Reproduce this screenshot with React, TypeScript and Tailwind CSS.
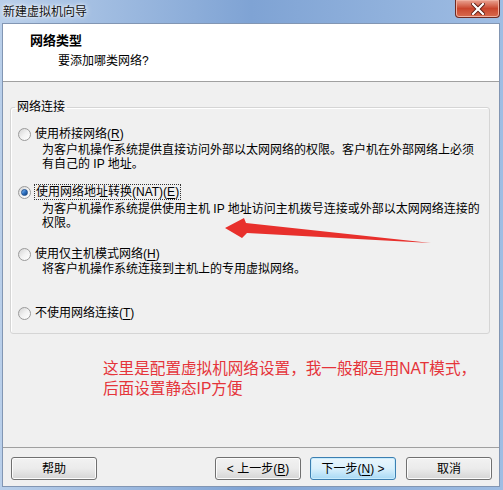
import React from "react"

const FONT = "font-['Liberation_Sans','Noto_Sans_CJK_SC',sans-serif]"

type Opt = {
  label: string
  key: string
  desc?: string[]
  checked?: boolean
  focus?: boolean
  mt: string
  descMt: string
}

const options: Opt[] = [
  {
    label: "使用桥接网络",
    key: "R",
    desc: ["为客户机操作系统提供直接访问外部以太网网络的权限。客户机在外部网络上必须", "有自己的 IP 地址。"],
    mt: "mt-[11px]",
    descMt: "mt-[1px]",
  },
  {
    label: "使用网络地址转换(NAT)",
    key: "E",
    desc: ["为客户机操作系统提供使用主机 IP 地址访问主机拨号连接或外部以太网网络连接的", "权限。"],
    checked: true,
    focus: true,
    mt: "mt-[13px]",
    descMt: "mt-[2px]",
  },
  {
    label: "使用仅主机模式网络",
    key: "H",
    desc: ["将客户机操作系统连接到主机上的专用虚拟网络。"],
    mt: "mt-[16px]",
    descMt: "mt-[0px]",
  },
  {
    label: "不使用网络连接",
    key: "T",
    mt: "mt-[29px]",
    descMt: "mt-[0px]",
  },
]

function Radio({ checked }: { checked?: boolean }) {
  return (
    <span className="flex h-[13px] w-[13px] shrink-0 items-center justify-center rounded-full border border-[#9a9a9a] bg-gradient-to-br from-[#d4d4d4] via-[#f2f2f2] to-[#ffffff]">
      {checked && (
        <span className="h-[7px] w-[7px] rounded-full border border-[#1d4f8f] bg-gradient-to-br from-[#8cc0f2] via-[#2f74c6] to-[#123f7a]" />
      )}
    </span>
  )
}

function Button({ children, primary }: { children: React.ReactNode; primary?: boolean }) {
  return (
    <button
      className={
        primary
          ? "flex h-[23px] w-[86px] items-center justify-center rounded-[3px] border border-[#3c7fb1] bg-gradient-to-b from-[#eaf6fd] via-[#d9f0fc] to-[#a7d9f5] text-[12px] leading-[16px] text-black shadow-[inset_0_0_0_1px_#c8ecfd]"
          : "flex h-[23px] w-[86px] items-center justify-center rounded-[3px] border border-[#707070] bg-gradient-to-b from-[#f2f2f2] via-[#ebebeb] to-[#d5d5d5] text-[12px] leading-[16px] text-black shadow-[inset_0_0_0_1px_#fcfcfc]"
      }
    >
      {children}
    </button>
  )
}

export default function App() {
  return (
    <div className={`relative flex h-[490px] w-[503px] flex-col overflow-hidden bg-gradient-to-r from-[#b9cfea] via-[#7fa3d4] to-[#9fbde3] ${FONT}`}>
      {/* Title bar */}
      <div className="flex h-[24px] shrink-0 items-start">
        <span className="pl-[3px] pt-[4px] text-[12px] leading-[16px] text-[#111] [text-shadow:0_0_6px_#ffffff,0_0_3px_#ffffff]">
          新建虚拟机向导
        </span>
        <div className="ml-auto mr-[3px] flex h-[18px] w-[45px] items-center justify-center rounded-b-[4px] border border-t-0 border-[#6e2a22] bg-gradient-to-b from-[#e9a393] via-[#c9452d] to-[#d86a4e] shadow-[inset_0_0_0_1px_#f0b0a0]">
          <svg width="14" height="12" viewBox="0 0 14 12">
            <path d="M2 1 L12 11 M12 1 L2 11" stroke="#5a1c14" strokeWidth="4" strokeLinecap="square" />
            <path d="M2 1 L12 11 M12 1 L2 11" stroke="#ffffff" strokeWidth="2.2" strokeLinecap="square" />
          </svg>
        </div>
      </div>

      {/* Client area */}
      <div className="mb-[4px] ml-[3px] mr-[4px] flex flex-1 flex-col bg-[#f0f0f0] shadow-[0_0_0_1px_#8296b3]">
        {/* Header */}
        <div className="h-[58px] shrink-0 border-b border-[#a0a0a0] bg-white pt-[9px]">
          <div className="pl-[27px] text-[13px] font-bold leading-[16px] text-black">网络类型</div>
          <div className="mt-[4px] pl-[55px] text-[12px] leading-[16px] text-black">要添加哪类网络?</div>
        </div>

        {/* Body */}
        <div className="flex flex-1 flex-col pt-[17px]">
          <fieldset className="ml-[7px] w-[480px] rounded-[3px] border border-[#d5d5d5] px-[4px] pb-[12px] shadow-[inset_1px_1px_0_#ffffff]">
            <legend className="px-[2px] text-[12px] leading-[16px] text-black">网络连接</legend>
            {options.map((o) => (
              <div key={o.key} className={o.mt}>
                <div className="flex items-center pl-[3px]">
                  <Radio checked={o.checked} />
                  <span
                    className={
                      o.focus
                        ? "ml-[3px] border border-dotted border-[#333] px-[1px] text-[12px] leading-[14px] text-black"
                        : "ml-[4px] text-[12px] leading-[16px] text-black"
                    }
                  >
                    {o.label}(<span className="underline underline-offset-2">{o.key}</span>)
                  </span>
                </div>
                {o.desc && (
                  <div className={`${o.descMt} pl-[27px] text-[12px] leading-[14px] text-black`}>
                    {o.desc.map((d) => (
                      <div key={d}>{d}</div>
                    ))}
                  </div>
                )}
              </div>
            ))}
          </fieldset>

          <div className="ml-[100px] mt-[25px] text-[15.6px] leading-[20px] text-[#e5343a]">
            <div>这里是配置虚拟机网络设置，我一般都是用NAT模式，</div>
            <div>后面设置静态IP方便</div>
          </div>
        </div>

        {/* Footer */}
        <div className="flex h-[39px] shrink-0 items-start border-t border-[#a0a0a0] pl-[8px] pr-[7px] pt-[9px]">
          <Button>帮助</Button>
          <div className="ml-auto flex gap-[9px]">
            <Button>
              &lt; 上一步(<span className="underline underline-offset-2">B</span>)
            </Button>
            <Button primary>
              下一步(<span className="underline underline-offset-2">N</span>) &gt;
            </Button>
          </div>
          <div className="ml-[10px]">
            <Button>取消</Button>
          </div>
        </div>
      </div>

      {/* Annotation arrow */}
      <svg className="pointer-events-none absolute left-0 top-0" width="503" height="490" viewBox="0 0 503 490">
        <polygon points="225,228 244,218 246,223 431,243 247,233 242,238" fill="#e8302c" />
      </svg>
    </div>
  )
}
